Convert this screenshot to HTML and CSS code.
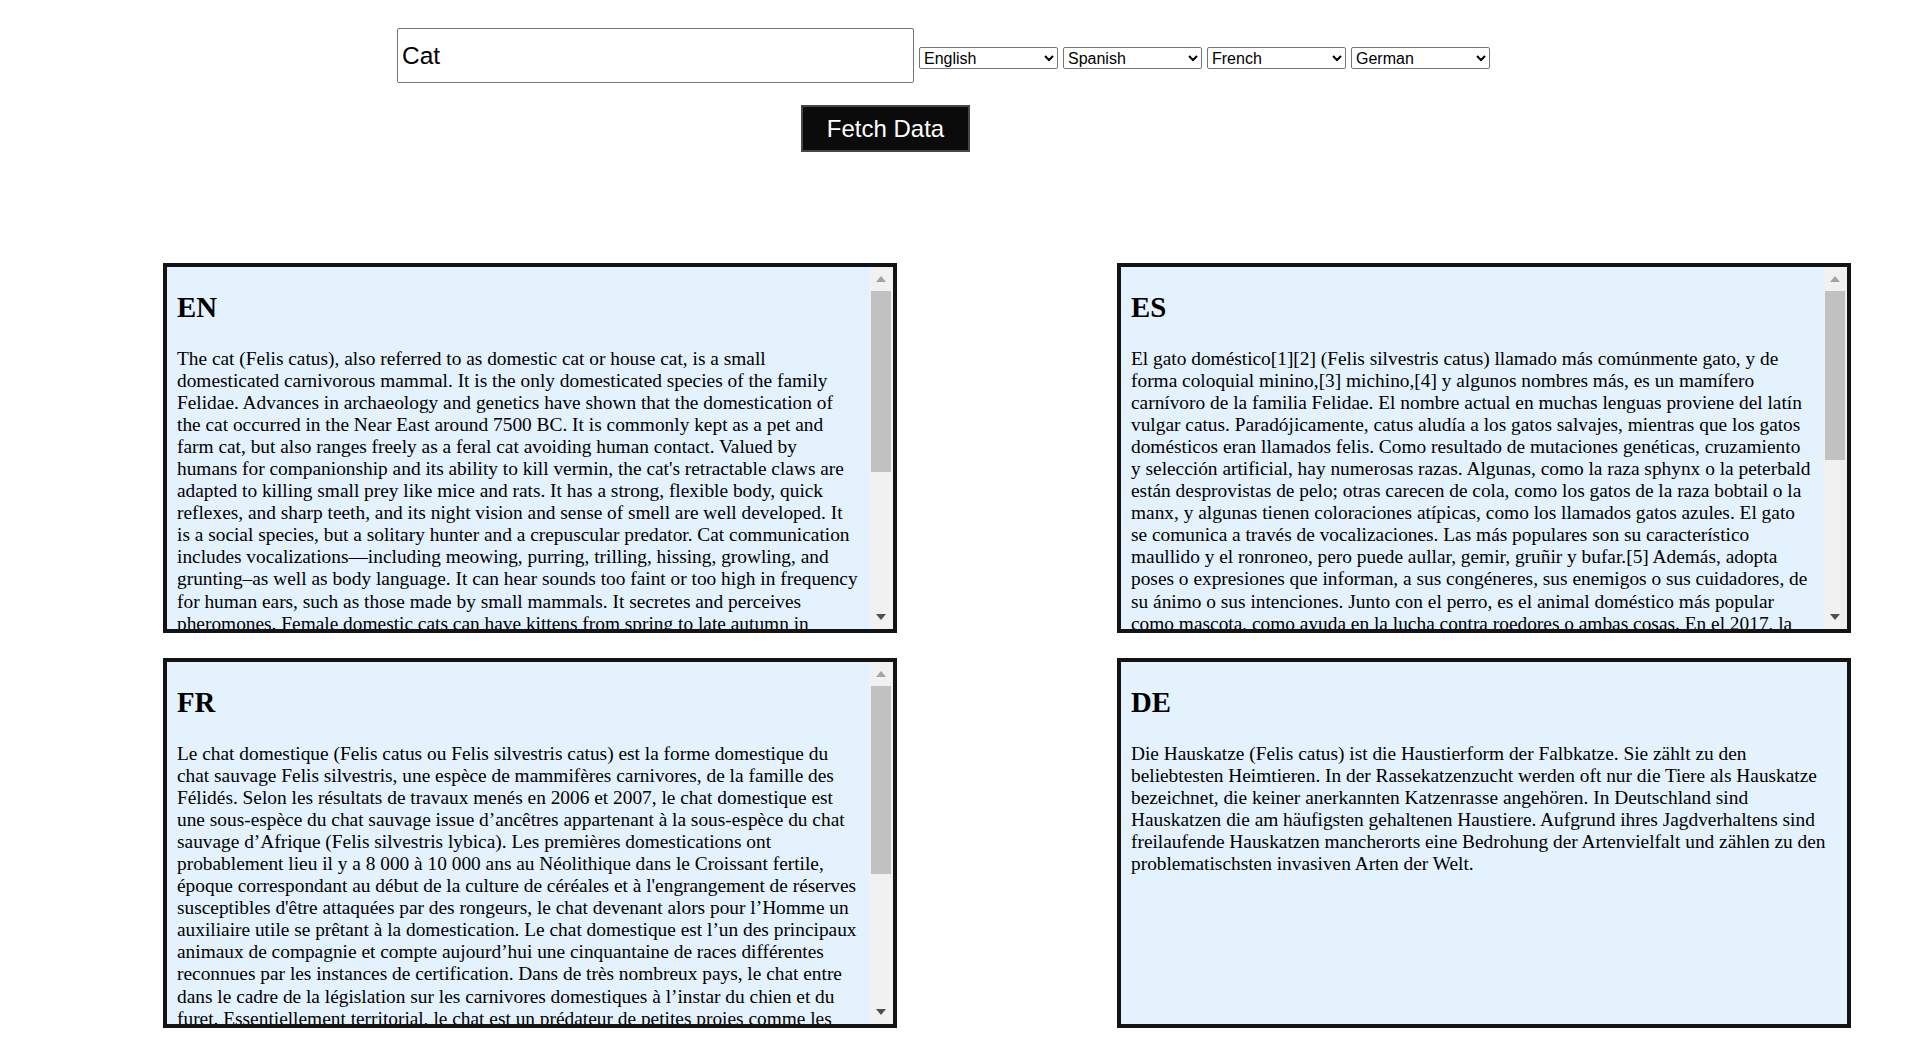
FILE: index.html
```html
<!DOCTYPE html>
<html lang="en">
<head>
<meta charset="utf-8">
<title>Wiki Fetch</title>
<link rel="stylesheet" href="styles.css">
</head>
<body>
<div class="controls">
  <div class="row">
    <input class="search" type="text" value="Cat">
    <select class="lang"><option>English</option></select>
    <select class="lang"><option>Spanish</option></select>
    <select class="lang"><option>French</option></select>
    <select class="lang"><option>German</option></select>
  </div>
  <div class="btn-row">
    <button class="fetch" type="button">Fetch Data</button>
  </div>
</div>

<div class="grid">
  <section class="panel">
    <div class="content">
      <h2>EN</h2>
      <p>The cat (Felis catus), also referred to as domestic cat or house cat, is a small domesticated carnivorous mammal. It is the only domesticated species of the family Felidae. Advances in archaeology and genetics have shown that the domestication of the cat occurred in the Near East around 7500 BC. It is commonly kept as a pet and farm cat, but also ranges freely as a feral cat avoiding human contact. Valued by humans for companionship and its ability to kill vermin, the cat's retractable claws are adapted to killing small prey like mice and rats. It has a strong, flexible body, quick reflexes, and sharp teeth, and its night vision and sense of smell are well developed. It is a social species, but a solitary hunter and a crepuscular predator. Cat communication includes vocalizations—including meowing, purring, trilling, hissing, growling, and grunting–as well as body language. It can hear sounds too faint or too high in frequency for human ears, such as those made by small mammals. It secretes and perceives pheromones. Female domestic cats can have kittens from spring to late autumn in temperate zones and throughout the year in tropical zones, with litter sizes often ranging from two to five kittens. Domestic cats are bred and shown at events as registered pedigreed cats, a hobby known as cat fancy. Animal population control of cats may be achieved by spaying and neutering, but their proliferation and the abandonment of pets has resulted in large numbers of feral cats worldwide, contributing to the extinction of bird, mammal and reptile species.</p>
    </div>
    <div class="scrollbar">
      <div class="sb-btn"><span class="arrow-up"></span></div>
      <div class="sb-track"><div class="sb-thumb" style="height:181px"></div></div>
      <div class="sb-btn"><span class="arrow-down"></span></div>
    </div>
  </section>

  <section class="panel">
    <div class="content">
      <h2>ES</h2>
      <p>El gato doméstico[1][2] (Felis silvestris catus) llamado más comúnmente gato, y de forma coloquial minino,[3] michino,[4] y algunos nombres más, es un mamífero carnívoro de la familia Felidae. El nombre actual en muchas lenguas proviene del latín vulgar catus. Paradójicamente, catus aludía a los gatos salvajes, mientras que los gatos domésticos eran llamados felis. Como resultado de mutaciones genéticas, cruzamiento y selección artificial, hay numerosas razas. Algunas, como la raza sphynx o la peterbald están desprovistas de pelo; otras carecen de cola, como los gatos de la raza bobtail o la manx, y algunas tienen coloraciones atípicas, como los llamados gatos azules. El gato se comunica a través de vocalizaciones. Las más populares son su característico maullido y el ronroneo, pero puede aullar, gemir, gruñir y bufar.[5] Además, adopta poses o expresiones que informan, a sus congéneres, sus enemigos o sus cuidadores, de su ánimo o sus intenciones. Junto con el perro, es el animal doméstico más popular como mascota, como ayuda en la lucha contra roedores o ambas cosas. En el 2017, la población mundial de gatos domésticos se estimaba en unos 600 millones de ejemplares.</p>
    </div>
    <div class="scrollbar">
      <div class="sb-btn"><span class="arrow-up"></span></div>
      <div class="sb-track"><div class="sb-thumb" style="height:169px"></div></div>
      <div class="sb-btn"><span class="arrow-down"></span></div>
    </div>
  </section>

  <section class="panel">
    <div class="content">
      <h2>FR</h2>
      <p>Le chat domestique (Felis catus ou Felis silvestris catus) est la forme domestique du chat sauvage Felis silvestris, une espèce de mammifères carnivores, de la famille des Félidés. Selon les résultats de travaux menés en 2006 et 2007, le chat domestique est une sous-espèce du chat sauvage issue d’ancêtres appartenant à la sous-espèce du chat sauvage d’Afrique (Felis silvestris lybica). Les premières domestications ont probablement lieu il y a 8&nbsp;000 à 10&nbsp;000 ans au Néolithique dans le Croissant fertile, époque correspondant au début de la culture de céréales et à l'engrangement de réserves susceptibles d'être attaquées par des rongeurs, le chat devenant alors pour l’Homme un auxiliaire utile se prêtant à la domestication. Le chat domestique est l’un des principaux animaux de compagnie et compte aujourd’hui une cinquantaine de races différentes reconnues par les instances de certification. Dans de très nombreux pays, le chat entre dans le cadre de la législation sur les carnivores domestiques à l’instar du chien et du furet. Essentiellement territorial, le chat est un prédateur de petites proies comme les rongeurs ou les oiseaux.</p>
    </div>
    <div class="scrollbar">
      <div class="sb-btn"><span class="arrow-up"></span></div>
      <div class="sb-track"><div class="sb-thumb" style="height:188px"></div></div>
      <div class="sb-btn"><span class="arrow-down"></span></div>
    </div>
  </section>

  <section class="panel">
    <div class="content">
      <h2>DE</h2>
      <p>Die Hauskatze (Felis catus) ist die Haustierform der Falbkatze. Sie zählt zu den beliebtesten Heimtieren. In der Rassekatzenzucht werden oft nur die Tiere als Hauskatze bezeichnet, die keiner anerkannten Katzenrasse angehören. In Deutschland sind Hauskatzen die am häufigsten gehaltenen Haustiere. Aufgrund ihres Jagdverhaltens sind freilaufende Hauskatzen mancherorts eine Bedrohung der Artenvielfalt und zählen zu den problematischsten invasiven Arten der Welt.</p>
    </div>
  </section>
</div>
</body>
</html>
```

FILE: styles.css
```css
html, body {
  margin: 0;
  padding: 0;
  background: #ffffff;
}

body {
  font-family: "Liberation Serif", "Times New Roman", serif;
  color: #000;
}

.controls {
  display: flex;
  flex-direction: column;
  padding-top: 28px;
}

.row {
  display: flex;
  align-items: baseline;
  gap: 5px;
  padding-left: 397px;
}

.search {
  box-sizing: border-box;
  width: 517px;
  height: 55px;
  margin: 0;
  padding: 0 4px;
  border: 1px solid #767676;
  border-radius: 2px;
  font-family: "Liberation Sans", Arial, sans-serif;
  font-size: 24.5px;
  color: #000;
  background: #fff;
}

.lang {
  box-sizing: border-box;
  width: 139px;
  height: 22px;
  margin: 0;
  font-family: "Liberation Sans", Arial, sans-serif;
  font-size: 16px;
  color: #000;
  background-color: #fff;
  border: 1px solid #767676;
  border-radius: 2px;
}

.btn-row {
  display: flex;
  padding-left: 801px;
  padding-top: 22px;
}

.fetch {
  box-sizing: border-box;
  width: 169px;
  height: 47px;
  margin: 0;
  padding: 0;
  background: #0b0b0b;
  color: #ffffff;
  border: 2px solid #474747;
  font-family: "Liberation Sans", Arial, sans-serif;
  font-size: 24px;
  cursor: pointer;
}

.grid {
  display: grid;
  grid-template-columns: 734px 734px;
  column-gap: 220px;
  row-gap: 25px;
  padding-left: 163px;
  padding-top: 111px;
}

.panel {
  box-sizing: border-box;
  height: 370px;
  border: 4px solid #141414;
  background: #e3f2fd;
  display: flex;
  overflow: hidden;
}

.content {
  flex: 1;
  min-width: 0;
  overflow: hidden;
  padding: 0 10px;
}

.content h2 {
  font-size: 28.8px;
  line-height: normal;
  font-weight: bold;
  margin: 24px 0;
}

.content p {
  font-size: 19.37px;
  line-height: 22.05px;
  margin: 0 0 19px;
}

.scrollbar {
  flex: 0 0 24px;
  display: flex;
  flex-direction: column;
  background: #f1f1f1;
}

.sb-btn {
  height: 24px;
  flex: 0 0 24px;
  display: flex;
  align-items: center;
  justify-content: center;
}

.arrow-up {
  width: 0;
  height: 0;
  border-left: 5.5px solid transparent;
  border-right: 5.5px solid transparent;
  border-bottom: 6px solid #a3a3a3;
}

.arrow-down {
  width: 0;
  height: 0;
  border-left: 5.5px solid transparent;
  border-right: 5.5px solid transparent;
  border-top: 6px solid #505050;
}

.sb-track {
  flex: 1;
  padding: 0 2px;
}

.sb-thumb {
  background: #c1c1c1;
}
```
